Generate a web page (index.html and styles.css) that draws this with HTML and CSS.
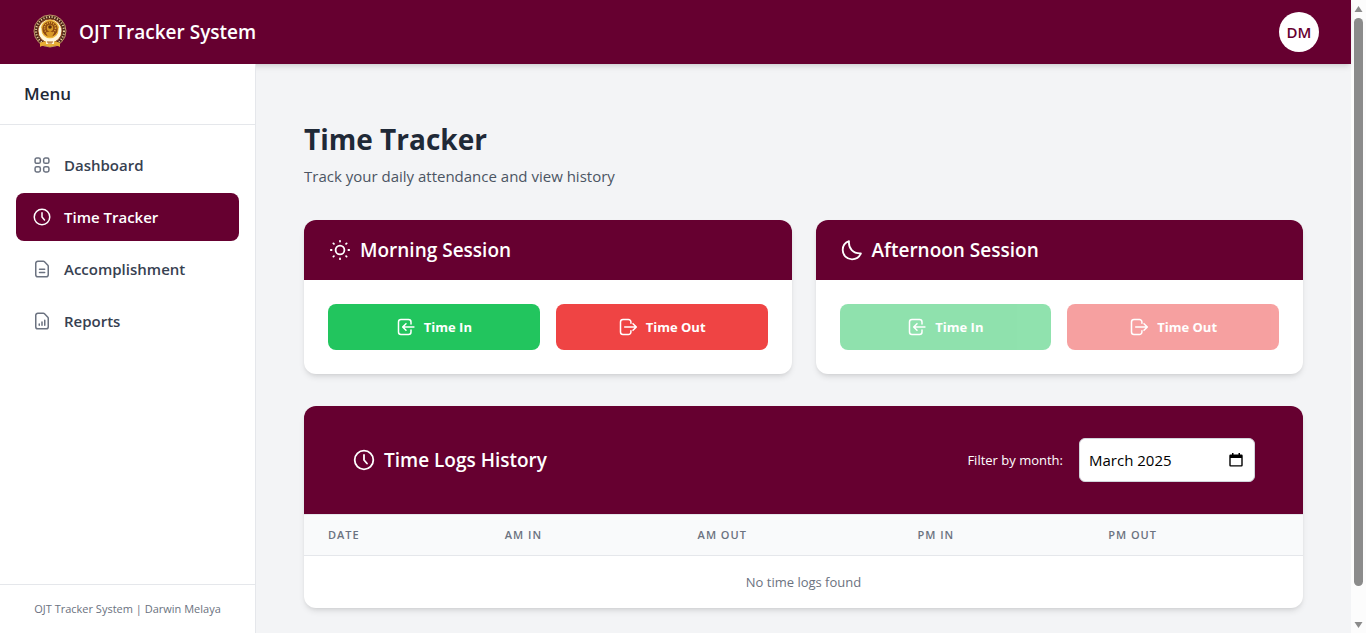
FILE: index.html
```html
<!DOCTYPE html>
<html lang="en">
<head>
<meta charset="utf-8">
<meta name="viewport" content="width=device-width, initial-scale=1">
<title>OJT Tracker System</title>
<link rel="stylesheet" href="styles.css">
</head>
<body>
<svg class="sprite" aria-hidden="true">
  <symbol id="i-clock" viewBox="0 0 24 24"><circle cx="12" cy="12" r="9.3"/><path d="M12 7v5l3 3.5"/></symbol>
  <symbol id="i-grid" viewBox="0 0 24 24"><rect x="3.7" y="3.7" width="6.3" height="6.3" rx="2"/><rect x="14" y="3.7" width="6.3" height="6.3" rx="2"/><rect x="3.7" y="14" width="6.3" height="6.3" rx="2"/><rect x="14" y="14" width="6.3" height="6.3" rx="2"/></symbol>
  <symbol id="i-doc" viewBox="0 0 24 24"><path d="M4.5 5.2A2.5 2.5 0 0 1 7 2.7h6.600a2 2 0 0 1 1.400.6l4 4.200a2 2 0 0 1 .5 1.400V18.800a2.500 2.500 0 0 1-2.500 2.500H7a2.500 2.500 0 0 1-2.500-2.500z"/><path d="M9 12.200h6.200M9 16.200h6.200"/></symbol>
  <symbol id="i-report" viewBox="0 0 24 24"><path d="M4.5 5.2A2.5 2.5 0 0 1 7 2.7h6.600a2 2 0 0 1 1.400.6l4 4.200a2 2 0 0 1 .5 1.400V18.800a2.500 2.500 0 0 1-2.500 2.500H7a2.500 2.500 0 0 1-2.500-2.500z"/><path d="M8.700 15.500v1.700M12 13.200v4M15.300 11v6.200"/></symbol>
  <symbol id="i-sun" viewBox="0 0 24 24"><circle cx="12" cy="12" r="4.400"/><path d="M12 2.800v.8M12 20.400v.8M2.800 12h.8M20.400 12h.8M5.400 5.400l.5.5M18.100 18.100l.5.5M18.600 5.400l-.5.5M5.900 18.100l-.5.5"/></symbol>
  <symbol id="i-moon" viewBox="0 0 24 24"><path d="M9 3.200C8.300 10.200 13 15.800 20.900 15.300C19.300 19.200 15.800 21.300 12 21.300A9.300 9.300 0 0 1 2.700 12C2.700 8 5.200 4.600 9 3.200z"/></symbol>
  <symbol id="i-in" viewBox="0 0 24 24"><path d="M18 8.500V6a3 3 0 0 0-3-3H6a3 3 0 0 0-3 3v12a3 3 0 0 0 3 3h9a3 3 0 0 0 3-3v-2.500"/><path d="M21.500 12H8.500M12 8l-4 4 4 4"/></symbol>
  <symbol id="i-out" viewBox="0 0 24 24"><path d="M15.500 7.500V6a3 3 0 0 0-3-3H6a3 3 0 0 0-3 3v12a3 3 0 0 0 3 3h6.500a3 3 0 0 0 3-3v-1.500"/><path d="M8 12h13M18 8l4 4-4 4"/></symbol>
</svg>

<div class="window">
  <div class="app">
    <header class="topbar">
      <div class="brand">
        <svg class="seal" viewBox="0 0 36 36" aria-hidden="true">
          <circle cx="18" cy="17" r="16" fill="#4d2519" stroke="#d9b478" stroke-width=".8"/>
          <circle cx="18" cy="17" r="14" fill="none" stroke="#e9cf9c" stroke-width="2" stroke-dasharray="1.100 1.700"/>
          <circle cx="18" cy="17" r="12" fill="#fff3ca" stroke="#8a4318" stroke-width="1"/>
          <circle cx="18" cy="15" r="8.500" fill="#8f4a12" stroke="#edb63b" stroke-width="1.500"/>
          <circle cx="18" cy="14" r="5.500" fill="none" stroke="#e3ab33" stroke-width="1.600" stroke-dasharray="1 1.200"/>
          <circle cx="18" cy="14" r="3.200" fill="#d99a26"/>
          <circle cx="18" cy="13" r="1.800" fill="#5b2c10"/>
          <path d="M14 19l4-2 4 2-2 4h-4z" fill="#d99a26"/>
          <path d="M8 14c0 9 4 12 10 13 6-1 10-4 10-13" fill="none" stroke="#fff7dc" stroke-width="2.600"/>
          <path d="M8 29c4-2 6-2 10 0 4-2 6-2 10 0v4c-4-2-6-1-10 0-4-1-6-2-10 0z" fill="#e8af35"/>
          <path d="M14 27h8v3h-8z" fill="#fff3ca"/><path d="M15 28h6M16 29h4" stroke="#a7642a"/>
        </svg>
        <span class="brand-name">OJT Tracker System</span>
      </div>
      <button class="avatar" type="button" aria-label="Account: DM">DM</button>
    </header>

    <div class="body">
      <aside class="sidebar">
        <h2 class="menu-title">Menu</h2>
        <nav class="nav">
          <a class="nav-link" href="#dashboard"><svg class="icon"><use href="#i-grid"/></svg>Dashboard</a>
          <a class="nav-link active" href="#tracker" aria-current="page"><svg class="icon"><use href="#i-clock"/></svg>Time Tracker</a>
          <a class="nav-link" href="#accomplishment"><svg class="icon"><use href="#i-doc"/></svg>Accomplishment</a>
          <a class="nav-link" href="#reports"><svg class="icon"><use href="#i-report"/></svg>Reports</a>
        </nav>
        <footer class="side-footer">OJT Tracker System | Darwin Melaya</footer>
      </aside>

      <main class="main">
        <h1 class="title">Time Tracker</h1>
        <p class="subtitle">Track your daily attendance and view history</p>

        <div class="sessions">
          <section class="card">
            <h2 class="card-head"><svg class="icon large"><use href="#i-sun"/></svg>Morning Session</h2>
            <div class="actions">
              <button class="btn green" type="button"><svg class="icon"><use href="#i-in"/></svg>Time In</button>
              <button class="btn red" type="button"><svg class="icon"><use href="#i-out"/></svg>Time Out</button>
            </div>
          </section>
          <section class="card">
            <h2 class="card-head"><svg class="icon large"><use href="#i-moon"/></svg>Afternoon Session</h2>
            <div class="actions">
              <button class="btn green" type="button" disabled><svg class="icon"><use href="#i-in"/></svg>Time In</button>
              <button class="btn red" type="button" disabled><svg class="icon"><use href="#i-out"/></svg>Time Out</button>
            </div>
          </section>
        </div>

        <section class="card">
          <div class="logs-head">
            <h2 class="logs-title"><svg class="icon large"><use href="#i-clock"/></svg>Time Logs History</h2>
            <div class="filter">
              <label for="month">Filter by month:</label>
              <div class="month">
                <input class="month-input" id="month" type="text" value="March 2025">
                <button class="month-picker" type="button" aria-label="Show month picker">
                  <svg class="calendar" viewBox="0 0 14 16"><path fill-rule="evenodd" d="M3 1h1.500v1.500h5V1H11v1.500h1.500A1.200 1.200 0 0 1 13.700 3.700v9.600a1.200 1.200 0 0 1-1.200 1.200h-11A1.200 1.200 0 0 1 .3 13.300V3.700a1.200 1.200 0 0 1 1.200-1.200H3zM1.700 6v7.200h10.600V6z"/></svg>
                </button>
              </div>
            </div>
          </div>
          <table class="logs">
            <colgroup><col class="c-date"><col class="c-amin"><col class="c-amout"><col class="c-pmin"><col class="c-pmout"></colgroup>
            <thead><tr><th>Date</th><th>AM In</th><th>AM Out</th><th>PM In</th><th>PM Out</th></tr></thead>
            <tbody><tr><td colspan="5">No time logs found</td></tr></tbody>
          </table>
        </section>
      </main>
    </div>
  </div>
  <div class="scrollbar" aria-hidden="true">
    <svg class="arrow" viewBox="0 0 9 8"><path d="M4.500 1L8.500 7h-8z"/></svg>
    <div class="track"><div class="thumb"></div></div>
    <svg class="arrow" viewBox="0 0 9 8"><path d="M4.500 7L8.500 1h-8z"/></svg>
  </div>
</div>
</body>
</html>
```

FILE: styles.css
```css
* { box-sizing: border-box; }

:root {
  --maroon: #660030;
  --line: #e5e7eb;
}

body, h1, h2, p { margin: 0; }

body {
  background: #f3f4f6;
  color: #1f2937;
  font-family: "Segoe UI", "Open Sans", "Noto Sans", sans-serif;
  font-size: 15px;
  line-height: 24px;
}

button, input { font: inherit; }

.sprite { position: absolute; width: 0; height: 0; }

.icon {
  flex: none;
  width: 20px;
  height: 20px;
  fill: none;
  stroke: currentColor;
  stroke-width: 1.8;
  stroke-linecap: round;
  stroke-linejoin: round;
}
.icon.large { width: 24px; height: 24px; }

.window { display: flex; min-height: 100vh; }
.app { flex: 1; min-width: 0; display: flex; flex-direction: column; }

.topbar {
  position: relative;
  z-index: 1;
  height: 64px;
  padding: 0 32px;
  display: flex;
  align-items: center;
  justify-content: space-between;
  background: var(--maroon);
  box-shadow: 0 4px 6px -1px rgba(0, 0, 0, .1), 0 2px 4px -2px rgba(0, 0, 0, .1);
}
.brand { display: flex; align-items: center; gap: 11px; }
.seal { width: 36px; height: 36px; }
.brand-name { color: #fff; font-size: 19px; line-height: 30px; font-weight: 600; }

.avatar {
  width: 40px;
  height: 40px;
  padding: 0;
  border: 0;
  border-radius: 50%;
  background: #fff;
  color: var(--maroon);
  font-weight: 600;
}

.body { flex: 1; display: flex; }

.sidebar {
  position: relative;
  z-index: 2;
  width: 256px;
  flex: none;
  display: flex;
  flex-direction: column;
  background: #fff;
  border-right: 1px solid var(--line);
}
.menu-title {
  padding: 16px 24px;
  border-bottom: 1px solid var(--line);
  font-size: 17px;
  line-height: 28px;
  font-weight: 600;
}
.nav { flex: 1; padding: 16px; display: flex; flex-direction: column; gap: 4px; }
.nav-link {
  display: flex;
  align-items: center;
  gap: 12px;
  padding: 12px 16px;
  border-radius: 8px;
  color: #374151;
  font-weight: 600;
  text-decoration: none;
}
.nav-link .icon { color: #6b7280; }
.nav-link.active { background: var(--maroon); color: #fff; }
.nav-link.active .icon { color: #fff; }
.side-footer {
  padding: 16px;
  border-top: 1px solid var(--line);
  color: #6b7280;
  font-size: 11px;
  line-height: 16px;
  text-align: center;
}

.main { flex: 1; min-width: 0; padding: 56px 48px 24px; }
.title { font-size: 28px; line-height: 38px; font-weight: 700; }
.subtitle { margin: 6px 0 32px; color: #4b5563; }

.sessions { display: grid; grid-template-columns: 1fr 1fr; gap: 24px; margin-bottom: 32px; }
.card {
  overflow: hidden;
  background: #fff;
  border-radius: 12px;
  box-shadow: 0 4px 6px -1px rgba(0, 0, 0, .1), 0 2px 4px -2px rgba(0, 0, 0, .1);
}
.card-head, .logs-title {
  display: flex;
  align-items: center;
  gap: 8px;
  color: #fff;
  font-size: 19px;
  line-height: 28px;
  font-weight: 600;
}
.card-head { padding: 16px 24px; background: var(--maroon); }
.actions { display: grid; grid-template-columns: 1fr 1fr; gap: 16px; padding: 24px; }
.btn {
  display: flex;
  align-items: center;
  justify-content: center;
  gap: 8px;
  padding: 12px 16px;
  border: 0;
  border-radius: 8px;
  color: #fff;
  font-size: 13px;
  line-height: 22px;
  font-weight: 700;
}
.btn.green { background: #22c55e; }
.btn.red { background: #ef4444; }
.btn:disabled { opacity: .5; }

.logs-head {
  display: flex;
  align-items: center;
  justify-content: space-between;
  padding: 32px 48px;
  background: var(--maroon);
}
.filter { display: flex; align-items: center; gap: 16px; color: #fff; font-size: 13px; }
.month {
  display: flex;
  align-items: center;
  width: 176px;
  height: 44px;
  padding: 0 9px;
  border: 1px solid #d1d5db;
  border-radius: 6px;
  background: #fff;
}
.month-input {
  flex: 1;
  min-width: 0;
  padding: 0;
  border: 0;
  outline: 0;
  background: none;
  color: #000;
  font-size: 15px;
}
.month-picker {
  display: flex;
  padding: 2px;
  border: 0;
  background: none;
}
.calendar { width: 14px; height: 16px; fill: #000; }

.logs { width: 100%; table-layout: fixed; border-collapse: collapse; font-size: 13px; }
.c-date { width: 17.7%; }
.c-amin { width: 19.3%; }
.c-amout { width: 22%; }
.c-pmin { width: 19.1%; }
.c-pmout { width: 21.9%; }
.logs th {
  padding: 12px 24px;
  border-top: 1px solid var(--line);
  border-bottom: 1px solid var(--line);
  background: #f9fafb;
  color: #6b7280;
  font-size: 11px;
  line-height: 16px;
  font-weight: 600;
  letter-spacing: 1px;
  text-align: left;
  text-transform: uppercase;
}
.logs td { padding: 16px 24px; color: #6b7280; line-height: 20px; text-align: center; }

.scrollbar {
  width: 15px;
  flex: none;
  display: flex;
  flex-direction: column;
  align-items: center;
  gap: 5px;
  padding: 5px 0 4px;
  background: #fcfcfc;
}
.arrow { width: 9px; height: 8px; fill: #8b8b8b; }
.track { flex: 1; }
.thumb { width: 9px; height: 95%; border-radius: 5px; background: #8b8b8b; }
```
